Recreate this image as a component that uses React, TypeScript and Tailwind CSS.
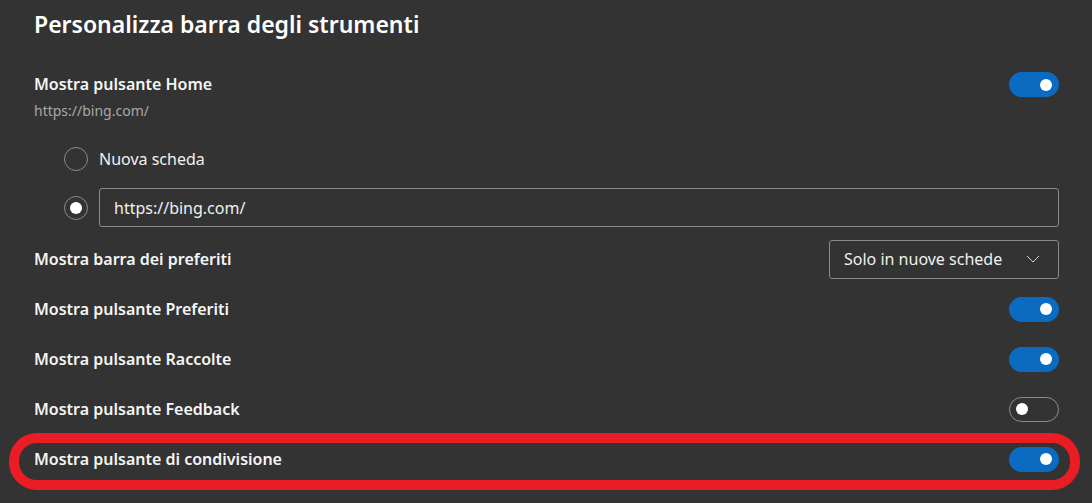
import React from "react";

const font = { fontFamily: '"Noto Sans", "Open Sans", sans-serif' };

function Toggle({ on }: { on: boolean }) {
  return on ? (
    <div className="w-[50px] h-[25px] rounded-full bg-[#0b6bc1] flex items-center justify-end pr-[7px]">
      <div className="w-[12px] h-[12px] rounded-full bg-white" />
    </div>
  ) : (
    <div className="w-[50px] h-[25px] rounded-full border border-[#8c8c8c] flex items-center justify-start pl-[6px]">
      <div className="w-[12px] h-[12px] rounded-full bg-white" />
    </div>
  );
}

function Row({ label, children }: { label: string; children?: React.ReactNode }) {
  return (
    <div className="h-[50px] flex items-center justify-between pl-[34px] pr-[33px]">
      <span className="text-[16px] font-semibold text-[#f5f5f5]">{label}</span>
      {children}
    </div>
  );
}

export default function App() {
  return (
    <div className="w-[1092px] h-[503px] bg-[#333333] overflow-hidden text-white" style={font}>
      <div className="pl-[34px] pt-[4px] h-[60px]">
        <h1 className="text-[23px] font-semibold text-white leading-[40px]">Personalizza barra degli strumenti</h1>
      </div>
      <div className="flex items-start justify-between pl-[34px] pr-[33px] pt-[12px]">
        <div className="flex flex-col">
          <span className="text-[16px] font-semibold text-[#f5f5f5] leading-[24px]">Mostra pulsante Home</span>
          <span className="text-[14px] text-[#a8a8a8] leading-[20px] mt-[5px]">https://bing.com/</span>
        </div>
        <Toggle on />
      </div>
      <div className="pl-[64px] pr-[33px] pt-[18px] flex flex-col gap-[10px]">
        <div className="flex items-center h-[39px]">
          <div className="w-[24px] h-[24px] rounded-full border border-[#8c8c8c]" />
          <span className="ml-[11px] text-[16px] text-[#f0f0f0]">Nuova scheda</span>
        </div>
        <div className="flex items-center h-[39px]">
          <div className="w-[24px] h-[24px] rounded-full border border-[#8c8c8c] flex items-center justify-center">
            <div className="w-[12px] h-[12px] rounded-full bg-white" />
          </div>
          <div className="ml-[11px] flex-1 h-[39px] border border-[#8a8a8a] rounded-[3px] flex items-center pl-[14px]">
            <span className="text-[16px] text-[#f0f0f0]">https://bing.com/</span>
          </div>
        </div>
      </div>
      <div className="mt-[7px]">
        <Row label="Mostra barra dei preferiti">
          <div className="w-[230px] h-[39px] border border-[#8a8a8a] rounded-[3px] flex items-center justify-between pl-[14px] pr-[18px]">
            <span className="text-[16px] text-[#f0f0f0]">Solo in nuove schede</span>
            <svg width="14" height="8" viewBox="0 0 14 8" fill="none">
              <path d="M1 1 L7 7 L13 1" stroke="#d0d0d0" strokeWidth="1" />
            </svg>
          </div>
        </Row>
        <Row label="Mostra pulsante Preferiti">
          <Toggle on />
        </Row>
        <Row label="Mostra pulsante Raccolte">
          <Toggle on />
        </Row>
        <Row label="Mostra pulsante Feedback">
          <Toggle on={false} />
        </Row>
        <div className="relative">
          <Row label="Mostra pulsante di condivisione">
            <Toggle on />
          </Row>
          <div className="absolute left-[9px] top-[-1px] w-[1071px] h-[57px] rounded-[28px] border-[10px] border-[#ea1c24] pointer-events-none" />
        </div>
      </div>
    </div>
  );
}
